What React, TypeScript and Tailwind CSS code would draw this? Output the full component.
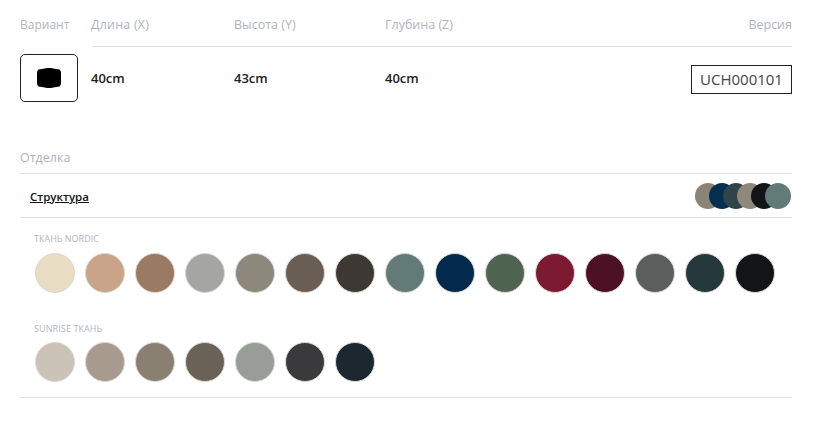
const nordic = ["#e8dcc3", "#c9a488", "#9b7a64", "#a5a5a1", "#8d887b", "#6a5e54", "#3e3833", "#627b79", "#032a4c", "#4e6350", "#7b1a30", "#4c1124", "#5a5e5d", "#25383c", "#121416"];
const sunrise = ["#cbc2b8", "#a89b8e", "#8a8072", "#6a6257", "#989d97", "#3a3a3c", "#1c2730"];
const mini = ["#8c8377", "#03304f", "#2f4448", "#8f897b", "#121416", "#627b79"];

function Swatch({ color }: { color: string }) {
  return (
    <div
      className="w-10 h-10 rounded-full border border-[#d8d8d8]"
      style={{ backgroundColor: color }}
    />
  );
}

export default function App() {
  return (
    <div className="w-[839px] h-[432px] bg-white pl-5 pr-[47px] font-['Open_Sans','Noto_Sans',sans-serif] overflow-hidden">
      <div className="flex">
        <div className="w-[72px] shrink-0">
          <div className="h-[47px] pt-4 text-[12px] leading-[18px] text-[#b0b6be]">Вариант</div>
          <div className="mt-[7px] w-[58px] h-12 border border-[#222] rounded-[5px] flex items-center justify-center">
            <svg width="24" height="20" viewBox="0 0 24 20">
              <path d="M1.5 1.5 Q7 .6 10 0 L14 0 Q17 .6 22.5 1.5 Q24 2.5 24 5 L24 15 Q24 17.5 22.5 18.5 Q17 19.4 14 20 L10 20 Q7 19.4 1.5 18.5 Q0 17.5 0 15 L0 5 Q0 2.5 1.5 1.5Z" fill="#000" />
            </svg>
          </div>
        </div>
        <div className="flex-1">
          <div className="flex h-[47px] pt-4 border-b border-[#dfdfe5] text-[12.5px] leading-[18px] text-[#aeb4bc]">
            <div className="w-[143px] -ml-px tracking-[0.2px]">Длина (X)</div>
            <div className="w-[151px]">Высота (Y)</div>
            <div>Глубина (Z)</div>
            <div className="ml-auto">Версия</div>
          </div>
          <div className="flex items-center h-[64px] text-[13px] font-semibold text-[#222]">
            <div className="w-[143px] -ml-px">40cm</div>
            <div className="w-[151px]">43cm</div>
            <div>40cm</div>
            <div className="ml-auto w-[101px] h-[29px] border border-[#222] flex items-center justify-center text-[15px] font-normal text-[#444]">
              UCH000101
            </div>
          </div>
        </div>
      </div>

      <div className="mt-[36px] h-[27px] pt-0.5 border-b border-[#dfdfe5] text-[12.5px] leading-[17px] text-[#aeb4bc]">Отделка</div>
      <div className="flex items-center justify-between h-11 pl-2.5 border-b border-[#dfdfe5]">
        <span className="mt-0.5 text-[11.5px] font-semibold underline text-[#111]">Структура</span>
        <div className="flex pr-px">
          {mini.map((c) => (
            <div key={c} className="w-[26px] h-[26px] rounded-full -ml-3 first:ml-0" style={{ backgroundColor: c }} />
          ))}
        </div>
      </div>

      <div className="pl-[15px] pt-[15px] pb-[15px] border-b border-[#dfdfe5]">
        <div className="-ml-px text-[9px] leading-3 text-[#b0b6be]">ТКАНЬ NORDIC</div>
        <div className="mt-2 flex gap-2.5">
          {nordic.map((c) => (
            <Swatch key={c} color={c} />
          ))}
        </div>
        <div className="-ml-px mt-[29px] pt-px -mb-px text-[9px] leading-3 tracking-[0.1px] text-[#b0b6be]">SUNRISE ТКАНЬ</div>
        <div className="mt-2 flex gap-2.5">
          {sunrise.map((c) => (
            <Swatch key={c} color={c} />
          ))}
        </div>
      </div>
    </div>
  );
}
